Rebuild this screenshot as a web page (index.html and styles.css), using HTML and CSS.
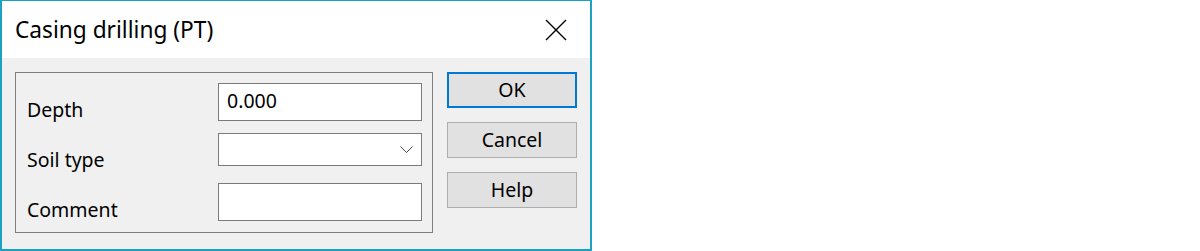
FILE: index.html
```html
<!DOCTYPE html>
<html lang="en">
<head>
    <meta charset="UTF-8">
    <meta name="viewport" content="width=device-width, initial-scale=1.0">
    <title>Casing drilling (PT)</title>
    <link rel="stylesheet" href="styles.css">
</head>
<body>
    <div class="dialog">
        <div class="titlebar">
            <span class="title">Casing drilling (PT)</span>
            <svg class="close" width="22" height="22" viewBox="0 0 22 22">
                <path d="M1 1 L21 21 M21 1 L1 21" stroke="#000" stroke-width="1.4" fill="none"/>
            </svg>
        </div>

        <div class="content">
            <div class="group">
                <label class="field-label" for="depth">Depth</label>
                <input class="field" type="text" id="depth" value="0.000">

                <label class="field-label" for="soil">Soil type</label>
                <div class="combo" id="soil">
                    <svg class="chevron" width="13" height="7" viewBox="0 0 13 7">
                        <path d="M0.5 0.5 L6.5 6.5 L12.5 0.5" stroke="#444" stroke-width="1" fill="none"/>
                    </svg>
                </div>

                <label class="field-label" for="comment">Comment</label>
                <input class="field" type="text" id="comment" value="">
            </div>

            <div class="buttons">
                <button class="btn btn-default">OK</button>
                <button class="btn">Cancel</button>
                <button class="btn">Help</button>
            </div>
        </div>
    </div>
</body>
</html>
```

FILE: styles.css
```css
body {
    margin: 0;
    padding: 0;
    background-color: #fff;
    font-family: "Noto Sans", "Open Sans", sans-serif;
    color: #000;
}

.dialog {
    width: 588px;
    height: 248px;
    border: 2px solid #1ba1c3;
    border-top-width: 1px;
    background-color: #f0f0f0;
    display: flex;
    flex-direction: column;
}

.titlebar {
    height: 57px;
    background-color: #fff;
    display: flex;
    align-items: center;
    justify-content: space-between;
    padding: 0 23px 0 13px;
}

.title {
    font-size: 22.7px;
    margin-top: -1px;
}

.close {
    display: block;
}

.content {
    display: flex;
    gap: 14px;
    padding: 14px 13px 0 13px;
}

.group {
    border: 1px solid #7f7f7f;
    display: grid;
    grid-template-columns: 191px 204px;
    grid-template-rows: 50px 50px 38px;
    padding: 10px 10px 11px 11px;
}

.field-label {
    font-size: 19.5px;
    line-height: 24px;
    padding-top: 15px;
}

.field {
    box-sizing: border-box;
    width: 204px;
    height: 38px;
    margin: 0;
    border: 1px solid #7a7a7a;
    background-color: #fff;
    font-family: inherit;
    font-size: 19.5px;
    padding: 0 8px 3px 8px;
    outline: none;
}

.combo {
    box-sizing: border-box;
    width: 204px;
    height: 33px;
    border: 1px solid #7a7a7a;
    background-color: #fff;
    display: flex;
    align-items: center;
    justify-content: flex-end;
    padding-right: 8px;
}

.buttons {
    display: flex;
    flex-direction: column;
    gap: 14px;
}

.btn {
    box-sizing: border-box;
    width: 130px;
    height: 36px;
    margin: 0;
    padding: 0 0 1px 0;
    border: 1px solid #adadad;
    background-color: #e1e1e1;
    font-family: inherit;
    font-size: 19.5px;
    color: #000;
}

.btn-default {
    border: 2px solid #0078d7;
}
```
